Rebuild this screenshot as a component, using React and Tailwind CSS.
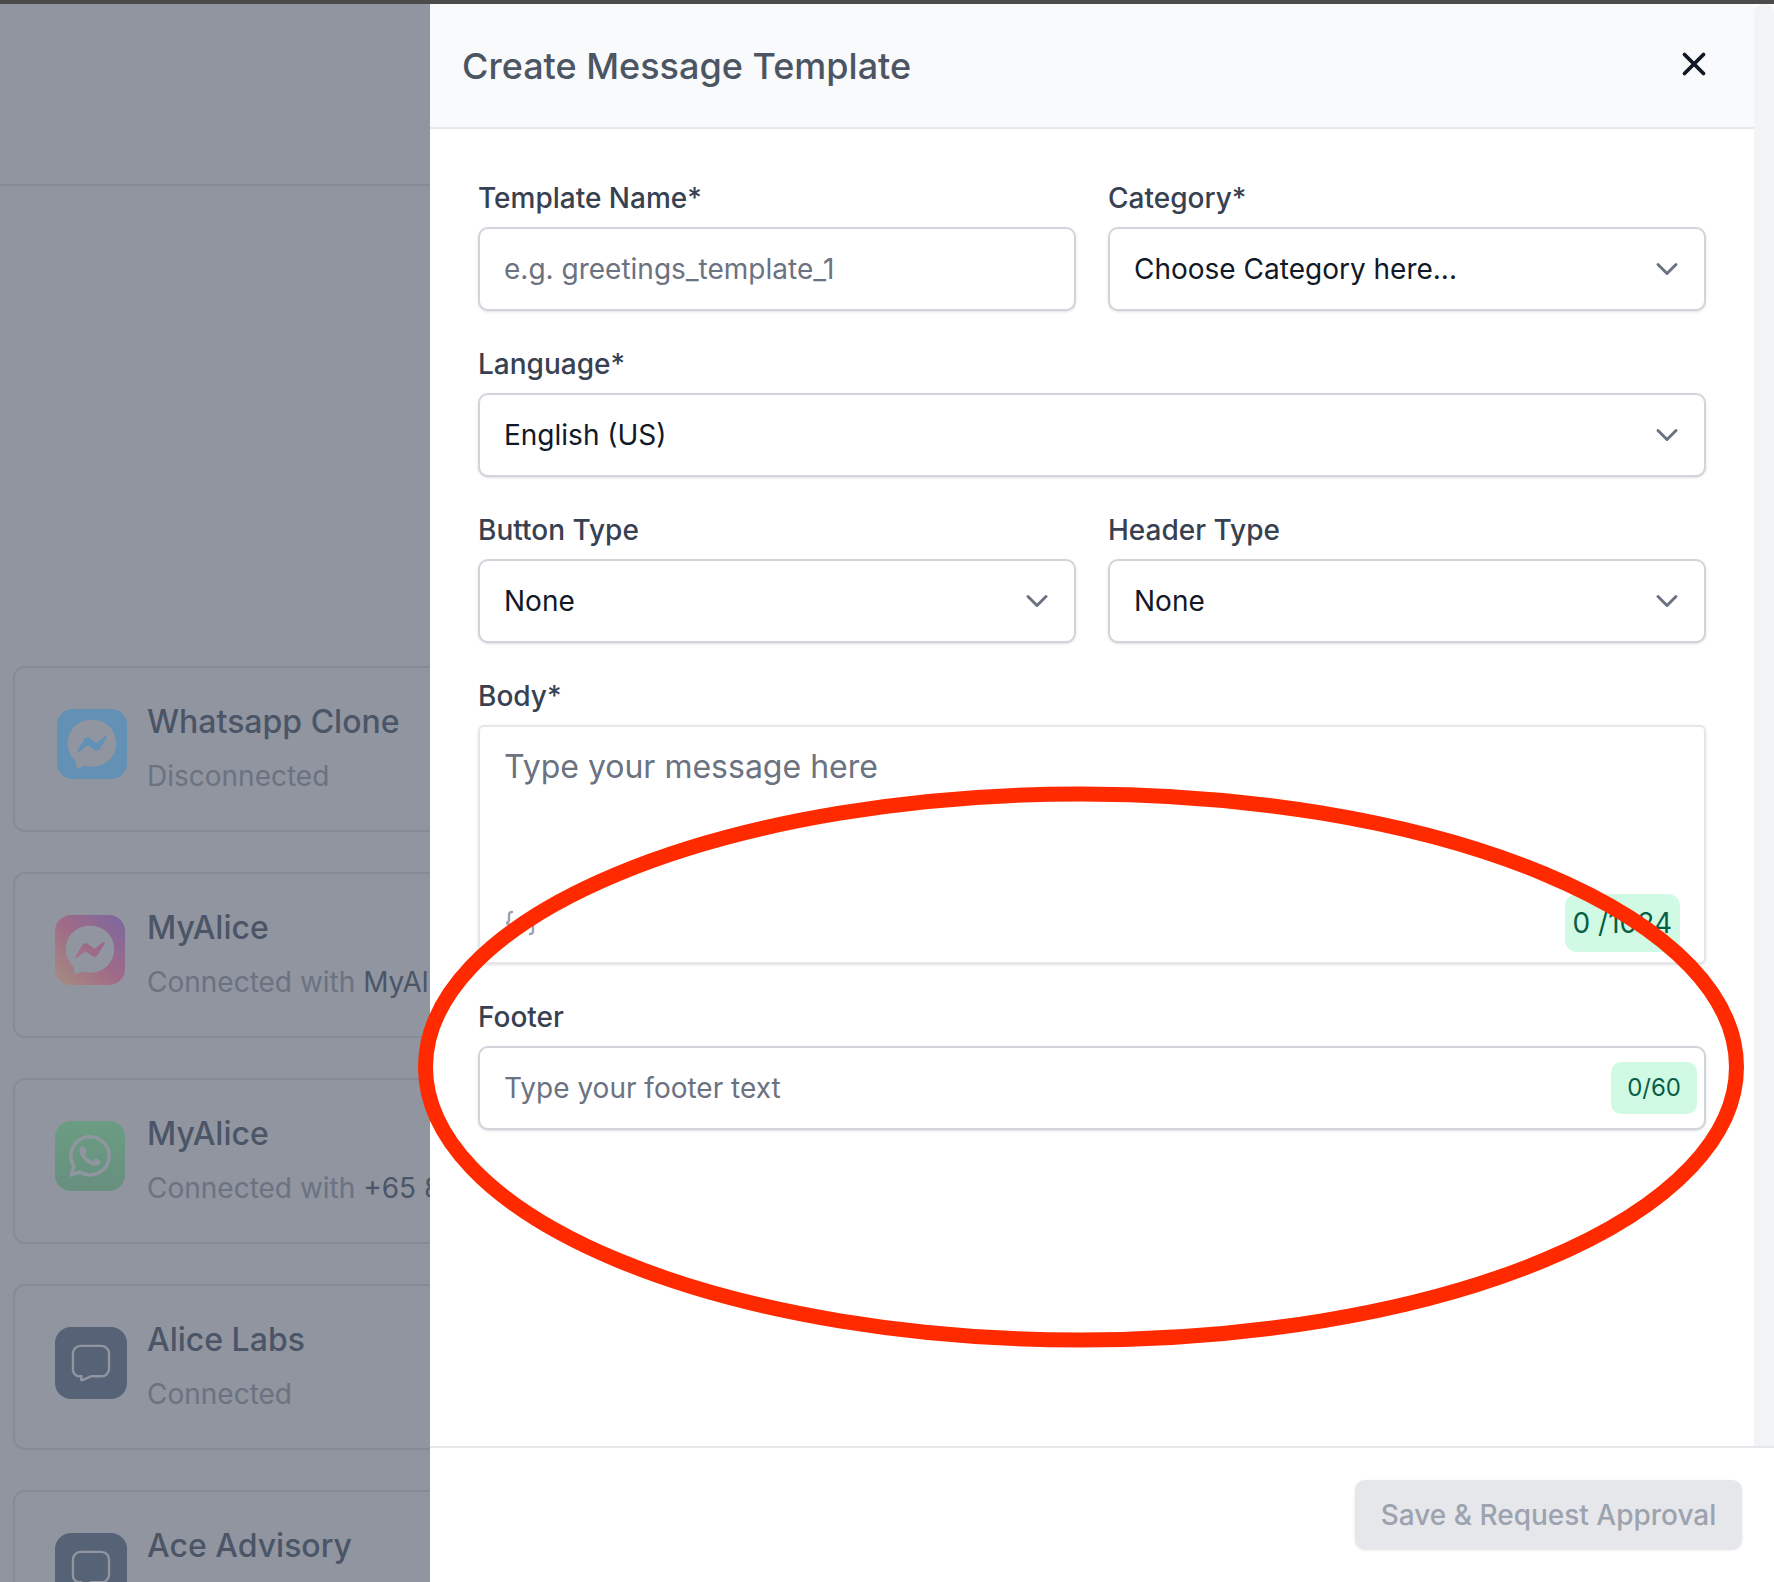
import { ChevronDown, X } from 'lucide-react'
import { FaFacebookMessenger, FaWhatsapp } from 'react-icons/fa'

const ChatIcon = () => (
  <svg width="40" height="38" viewBox="0 0 42 40" fill="none" stroke="#9095a0" strokeWidth="2.5" strokeLinejoin="round">
    <path d="M10 2h22a8 8 0 0 1 8 8v16a8 8 0 0 1-8 8H21l-9 4c-1 .4-1.6-.2-1.4-1l.4-3H9a7 7 0 0 1-7-7V10a8 8 0 0 1 8-8z" />
  </svg>
)

const ChannelCard = ({ title, children, iconBox }) => (
  <div className="w-[700px] h-[166px] flex-shrink-0 rounded-xl border-2 border-[#878b97] pl-[40px] pt-[41px] flex">
    <div className="w-[92px] flex-shrink-0">{iconBox}</div>
    <div className="-mt-[7px] whitespace-nowrap">
      <div className="text-[32px] leading-[40px] font-medium text-[#4b5567]">{title}</div>
      <div className="mt-[14px] text-[28px] leading-[40px] text-[#6b7280]">{children}</div>
    </div>
  </div>
)

const Field = ({ label, children }) => (
  <div>
    <div className="text-[28px] leading-[40px] font-medium text-[#374151] mb-[9px]">{label}</div>
    {children}
  </div>
)

const SelectBox = ({ value }) => (
  <div className="h-[84px] rounded-[10px] border-2 border-[#d1d5db] shadow-sm bg-white pl-[24px] pr-[19px] flex items-center justify-between">
    <span className="text-[28px] text-[#111827]">{value}</span>
    <ChevronDown size={36} strokeWidth={2} className="text-[#6b7280]" />
  </div>
)

const App = () => {
  return (
    <div className="relative w-[1774px] h-[1582px] overflow-hidden bg-[#9095a0] font-['Inter',sans-serif]">
      {/* Top edge */}
      <div className="h-[4px] bg-[#4b4b4b]" />

      <div className="flex h-[1578px]">
        {/* Dimmed channel list */}
        <div className="w-[430px] flex-shrink-0 overflow-hidden">
          <div className="h-[182px] border-b-2 border-[#878b97]" />
          <div className="mt-[480px] ml-[13px] flex flex-col gap-[40px]">
            <ChannelCard
              title="Whatsapp Clone"
              iconBox={
                <div className="ml-[2px] w-[70px] h-[70px] rounded-2xl bg-[#6390b5] flex items-center justify-center">
                  <FaFacebookMessenger size={50} className="text-[#9095a0]" />
                </div>
              }
            >
              Disconnected
            </ChannelCard>
            <ChannelCard
              title="MyAlice"
              iconBox={
                <div className="w-[70px] h-[70px] rounded-2xl bg-gradient-to-tr from-[#a58d80] via-[#a06a87] to-[#7a679f] flex items-center justify-center">
                  <FaFacebookMessenger size={50} className="text-[#9095a0]" />
                </div>
              }
            >
              Connected with <span className="text-[#4b5567]">MyAlice</span>
            </ChannelCard>
            <ChannelCard
              title="MyAlice"
              iconBox={
                <div className="w-[70px] h-[70px] rounded-2xl bg-gradient-to-b from-[#6b9d82] to-[#678f7e] flex items-center justify-center">
                  <FaWhatsapp size={48} className="text-[#9095a0]" />
                </div>
              }
            >
              Connected with <span className="text-[#4b5567]">+65 8123 4567</span>
            </ChannelCard>
            <ChannelCard
              title="Alice Labs"
              iconBox={
                <div className="w-[72px] h-[72px] rounded-2xl bg-[#566377] flex items-center justify-center">
                  <ChatIcon />
                </div>
              }
            >
              Connected
            </ChannelCard>
            <ChannelCard
              title="Ace Advisory"
              iconBox={
                <div className="w-[72px] h-[72px] rounded-2xl bg-[#566377] flex items-center justify-center">
                  <ChatIcon />
                </div>
              }
            >
              Connected
            </ChannelCard>
          </div>
        </div>

        {/* Slide-over panel */}
        <div className="flex-1 flex flex-col bg-white">
          <div className="flex-1 flex min-h-0">
            <div className="flex-1 flex flex-col">
              <div className="h-[125px] flex-shrink-0 bg-[#f9fafb] border-b-2 border-[#e5e7eb] pl-[32px] pr-[41px] flex items-center justify-between">
                <h1 className="text-[36px] font-medium text-[#4b5563]">Create Message Template</h1>
                <X size={38} strokeWidth={2.4} className="text-[#111827] -mt-[3px]" />
              </div>

              <div className="pt-[49px] px-[48px] flex flex-col gap-[33px]">
                <div className="grid grid-cols-2 gap-[32px]">
                  <Field label="Template Name*">
                    <div className="h-[84px] rounded-[10px] border-2 border-[#d1d5db] shadow-sm bg-white pl-[24px] flex items-center text-[28px] text-[#6b7280]">
                      e.g. greetings_template_1
                    </div>
                  </Field>
                  <Field label="Category*">
                    <SelectBox value="Choose Category here..." />
                  </Field>
                </div>

                <Field label="Language*">
                  <SelectBox value="English (US)" />
                </Field>

                <div className="grid grid-cols-2 gap-[32px]">
                  <Field label="Button Type">
                    <SelectBox value="None" />
                  </Field>
                  <Field label="Header Type">
                    <SelectBox value="None" />
                  </Field>
                </div>

                <Field label="Body*">
                  <div className="h-[239px] rounded-[6px] border-2 border-[#e5e7eb] shadow-sm bg-white pl-[24px] pr-[24px] pt-[20px] flex flex-col justify-between pb-[10px]">
                    <div className="text-[32px] leading-[40px] text-[#6b7280]">Type your message here</div>
                    <div className="flex items-end justify-between">
                      <svg width="34" height="26" viewBox="0 0 34 26" fill="none" stroke="#9ca3af" strokeWidth="2.4" strokeLinecap="round" className="mb-[16px]">
                        <path d="M8 2c-3 0-3 1.500-3 4v4c0 2-1 3-3 3 2 0 3 1 3 3v4c0 2.500 0 4 3 4" />
                        <path d="M26 2c3 0 3 1.500 3 4v4c0 2 1 3 3 3-2 0-3 1-3 3v4c0 2.500 0 4-3 4" />
                      </svg>
                      <div className="h-[58px] px-[8px] rounded-[12px] bg-[#d1fae5] text-[#065f46] text-[28px] flex items-center">0 /1024</div>
                    </div>
                  </div>
                </Field>

                <Field label="Footer">
                  <div className="h-[84px] rounded-[10px] border-2 border-[#d1d5db] shadow-sm bg-white pl-[24px] pr-[7px] flex items-center justify-between">
                    <span className="text-[28px] text-[#6b7280]">Type your footer text</span>
                    <div className="h-[52px] px-[16px] rounded-[10px] bg-[#d1fae5] text-[#065f46] text-[24px] flex items-center">0/60</div>
                  </div>
                </Field>
              </div>
            </div>

            {/* Scrollbar track */}
            <div className="w-[20px] bg-[#f3f4f6] rounded-t-lg" />
          </div>

          <div className="h-[136px] flex-shrink-0 border-t-2 border-[#e5e7eb] pr-[32px] pt-[32px] flex justify-end items-start">
            <button className="w-[387px] h-[69px] rounded-[10px] bg-[#e5e7eb] shadow-sm text-[28px] font-medium text-[#9ca3af]">
              Save &amp; Request Approval
            </button>
          </div>
        </div>
      </div>

      {/* Hand-drawn annotation over the form */}
      <svg className="absolute left-[410px] top-[780px]" width="1344" height="576" viewBox="0 0 1344 576" fill="none">
        <ellipse cx="671" cy="287" rx="655.500" ry="273" stroke="#ff2a00" strokeWidth="15" />
      </svg>
    </div>
  )
}

export default App
